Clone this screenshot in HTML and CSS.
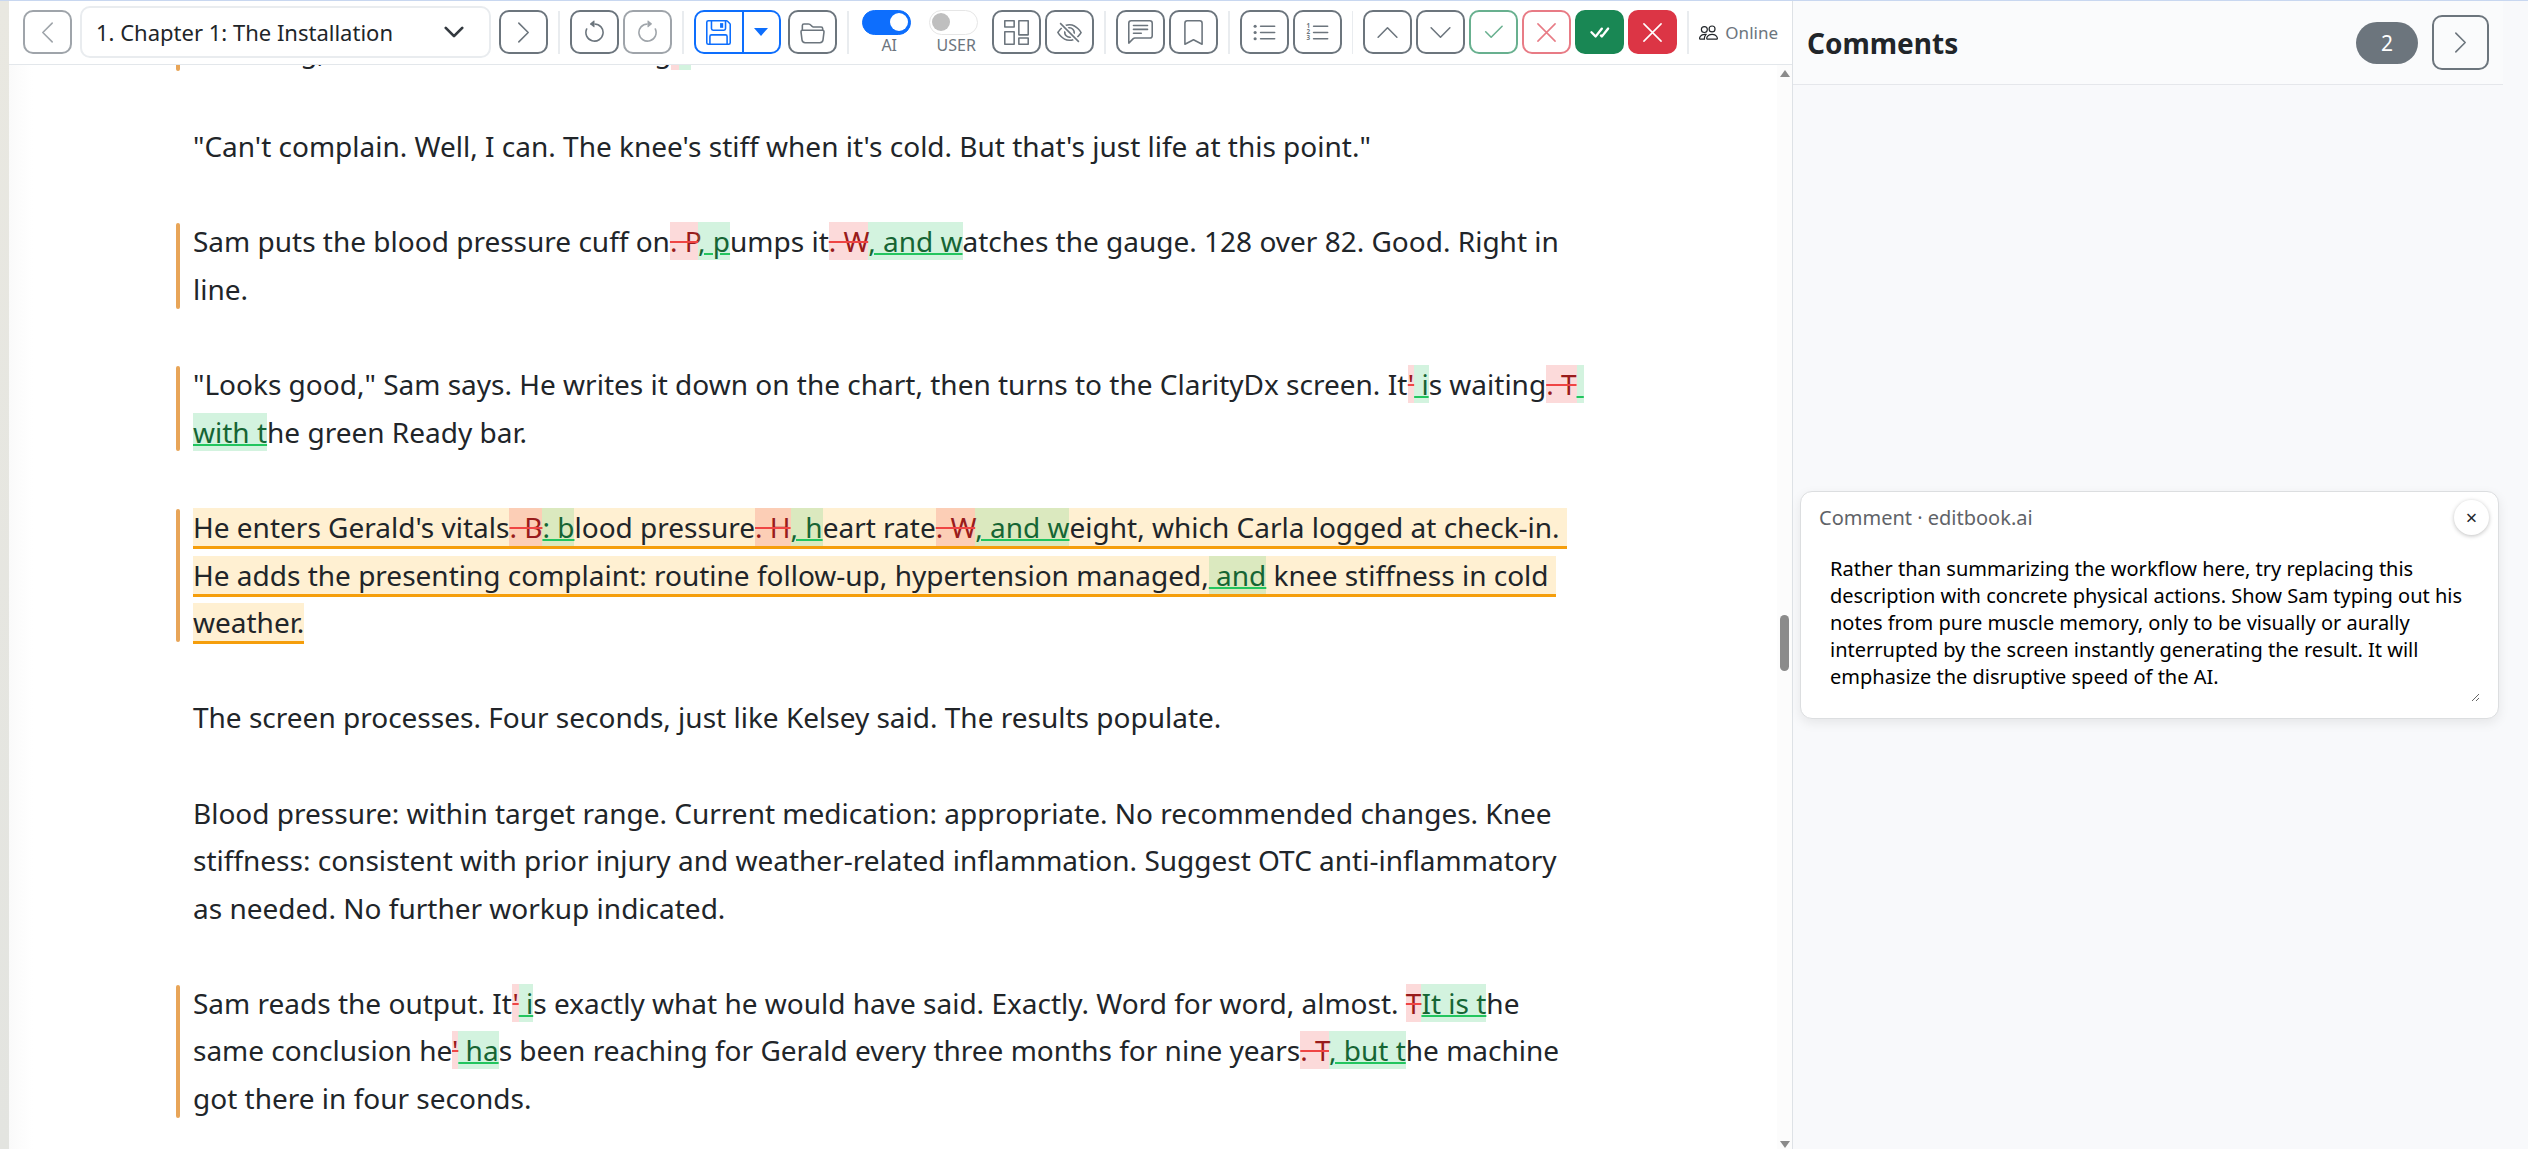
FILE: index.html
```html
<!DOCTYPE html>
<html lang="en">

<head>
  <meta charset="UTF-8">
  <meta name="viewport" content="width=device-width, initial-scale=1.0">
  <title>Chapter 1: The Installation</title>
  <link rel="stylesheet" href="styles.css">
</head>

<body>
  <svg class="sprite" aria-hidden="true">
    <symbol id="chevron-left" viewBox="0 0 16 16"><path class="line" d="M11 2L5 8l6 6" /></symbol>
    <symbol id="chevron-right" viewBox="0 0 16 16"><path class="line" d="M5 2l6 6-6 6" /></symbol>
    <symbol id="chevron-up" viewBox="0 0 16 16"><path class="line" d="M2 11l6-6 6 6" /></symbol>
    <symbol id="chevron-down" viewBox="0 0 16 16"><path class="line" d="M2 5l6 6 6-6" /></symbol>
    <symbol id="undo" viewBox="0 0 16 16">
      <path d="M8 3a5 5 0 1 1-4.546 2.914.5.5 0 0 0-.908-.417A6 6 0 1 0 8 2z" />
      <path d="M8 4.466V.534a.25.25 0 0 0-.41-.192L5.23 2.308a.25.25 0 0 0 0 .384l2.36 1.966A.25.25 0 0 0 8 4.466" />
    </symbol>
    <symbol id="redo" viewBox="0 0 16 16">
      <path d="M8 3a5 5 0 1 0 4.546 2.914.5.5 0 0 1 .908-.417A6 6 0 1 1 8 2z" />
      <path d="M8 4.466V.534a.25.25 0 0 1 .41-.192l2.36 1.966c.12.1.12.284 0 .384L8.41 4.658A.25.25 0 0 1 8 4.466" />
    </symbol>
    <symbol id="floppy" viewBox="0 0 16 16">
      <path d="M11 2H9v3h2z" />
      <path d="M1.5 0h11.586a1.5 1.5 0 0 1 1.06.44l1.415 1.414A1.5 1.5 0 0 1 16 2.914V14.5a1.5 1.5 0 0 1-1.5 1.5h-13A1.5 1.5 0 0 1 0 14.5v-13A1.5 1.5 0 0 1 1.5 0M1 1.5v13a.5.5 0 0 0 .5.5H2v-4.5A1.5 1.5 0 0 1 3.5 9h9a1.5 1.5 0 0 1 1.5 1.5V15h.5a.5.5 0 0 0 .5-.5V2.914a.5.5 0 0 0-.146-.353l-1.415-1.415A.5.5 0 0 0 13.086 1H13v4.5A1.5 1.5 0 0 1 11.5 7h-7A1.5 1.5 0 0 1 3 5.5V1H1.5a.5.5 0 0 0-.5.5m3 4a.5.5 0 0 0 .5.5h7a.5.5 0 0 0 .5-.5V1H4zM3 15h10v-4.5a.5.5 0 0 0-.5-.5h-9a.5.5 0 0 0-.5.5z" />
    </symbol>
    <symbol id="caret" viewBox="0 0 14 8"><path d="M0 0h14L7 8z" /></symbol>
    <symbol id="folder" viewBox="0 0 16 16">
      <path d="M1 3.5A1.5 1.5 0 0 1 2.5 2h2.764c.958 0 1.76.56 2.311 1.184C7.985 3.648 8.48 4 9 4h4.5A1.5 1.5 0 0 1 15 5.5v.64c.57.265.94.876.856 1.546l-.64 5.124A2.5 2.5 0 0 1 12.733 15H3.266a2.5 2.5 0 0 1-2.481-2.19l-.64-5.124A1.5 1.5 0 0 1 1 6.14zM2 6h12v-.5a.5.5 0 0 0-.5-.5H9c-.964 0-1.71-.629-2.174-1.154C6.374 3.334 5.82 3 5.264 3H2.5a.5.5 0 0 0-.5.5zm-.367 1a.5.5 0 0 0-.496.562l.64 5.124A1.5 1.5 0 0 0 3.266 14h9.468a1.5 1.5 0 0 0 1.489-1.314l.64-5.124A.5.5 0 0 0 14.367 7z" />
    </symbol>
    <symbol id="columns" viewBox="0 0 16 16">
      <path class="line" d="M.5.5h6v4h-6zM9.500.5h6v9h-6zM.5 7.500h6v8h-6zM9.500 11.500h6v4h-6z" />
    </symbol>
    <symbol id="eye-slash" viewBox="0 0 16 16">
      <path d="M13.359 11.238C15.06 9.72 16 8 16 8s-3-5.5-8-5.5a7 7 0 0 0-2.79.588l.77.771A6 6 0 0 1 8 3.5c2.12 0 3.879 1.168 5.168 2.457A13 13 0 0 1 14.828 8q-.086.13-.195.288c-.335.48-.83 1.12-1.465 1.755q-.247.248-.517.486z" />
      <path d="M11.297 9.176a3.5 3.5 0 0 0-4.474-4.474l.823.823a2.5 2.5 0 0 1 2.829 2.829zm-2.943 1.299.822.822a3.5 3.5 0 0 1-4.474-4.474l.823.823a2.5 2.5 0 0 0 2.829 2.829" />
      <path d="M3.35 5.47q-.27.24-.518.487A13 13 0 0 0 1.172 8l.195.288c.335.48.83 1.12 1.465 1.755C4.121 11.332 5.881 12.5 8 12.5c.716 0 1.39-.133 2.02-.36l.77.772A7 7 0 0 1 8 13.5C3 13.5 0 8 0 8s.939-1.721 2.641-3.238l.708.709zm10.296 8.884-12-12 .708-.708 12 12z" />
    </symbol>
    <symbol id="chat" viewBox="0 0 16 16">
      <path d="M14 1a1 1 0 0 1 1 1v8a1 1 0 0 1-1 1H4.414A2 2 0 0 0 3 11.586l-2 2V2a1 1 0 0 1 1-1zM2 0a2 2 0 0 0-2 2v12.793a.5.5 0 0 0 .854.353l2.853-2.853A1 1 0 0 1 4.414 12H14a2 2 0 0 0 2-2V2a2 2 0 0 0-2-2z" />
      <path class="line" d="M3.500 3.500h9M3.500 6h9M3.500 8.500h5" />
    </symbol>
    <symbol id="bookmark" viewBox="0 0 16 16">
      <path class="line" d="M2.500 15.500V2A1.500 1.500 0 0 1 4 .5h8A1.500 1.500 0 0 1 13.500 2v13.500L8 12.600z" />
    </symbol>
    <symbol id="list-ul" viewBox="0 0 16 16">
      <circle cx="2" cy="4" r="1" /><circle cx="2" cy="8" r="1" /><circle cx="2" cy="12" r="1" />
      <path class="line" d="M5.500 4h9M5.500 8h9M5.500 12h9" />
    </symbol>
    <symbol id="list-ol" viewBox="0 0 16 16">
      <text class="digit" x="1" y="5">1</text>
      <text class="digit" x="1" y="9">2</text>
      <text class="digit" x="1" y="13">3</text>
      <path class="line" d="M5.500 4h9M5.500 8h9M5.500 12h9" />
    </symbol>
    <symbol id="check" viewBox="0 0 16 16"><path class="line" d="M3 7.500L6.500 11l7-7" /></symbol>
    <symbol id="check-all" viewBox="0 0 16 16">
      <path d="M8.97 4.97a.75.75 0 0 1 1.07 1.05l-3.99 4.99a.75.75 0 0 1-1.08.02L2.324 8.384a.75.75 0 1 1 1.06-1.06l2.094 2.093L8.95 4.992zm-.92 5.14.92.92a.75.75 0 0 0 1.079-.02l3.992-4.99a.75.75 0 1 0-1.091-1.028L9.477 9.417l-.485-.486z" />
    </symbol>
    <symbol id="cross" viewBox="0 0 16 16"><path class="line" d="M2.500 2.500l11 11M13.500 2.500l-11 11" /></symbol>
    <symbol id="people" viewBox="0 0 16 16">
      <path d="M15 14s1 0 1-1-1-4-5-4-5 3-5 4 1 1 1 1zm-7.978-1L7 12.996c.001-.264.167-1.03.76-1.72C8.312 10.629 9.282 10 11 10c1.717 0 2.687.63 3.24 1.276.593.69.758 1.457.76 1.72l-.008.002-.014.002zM11 7a2 2 0 1 0 0-4 2 2 0 0 0 0 4m3-2a3 3 0 1 1-6 0 3 3 0 0 1 6 0M6.936 9.28a6 6 0 0 0-1.23-.247A7 7 0 0 0 5 9c-4 0-5 3-5 4q0 1 1 1h4.216A2.24 2.24 0 0 1 5 13c0-1.01.377-2.042 1.09-2.904.243-.294.526-.569.846-.816M4.92 10A5.5 5.5 0 0 0 4 13H1c0-.26.164-1.03.76-1.724.545-.636 1.492-1.256 3.16-1.275zM1.5 5.5a3 3 0 1 1 6 0 3 3 0 0 1-6 0m3-2a2 2 0 1 0 0 4 2 2 0 0 0 0-4" />
    </symbol>
  </svg>

  <div class="app">
    <div class="backdrop"></div>

    <main class="editor">
      <div class="toolbar">
        <div class="chapter-nav">
          <button class="btn" type="button" aria-label="Previous chapter" disabled><svg><use href="#chevron-left" /></svg></button>
          <select class="chapter-select" aria-label="Chapter">
            <option>1. Chapter 1: The Installation</option>
          </select>
          <button class="btn" type="button" aria-label="Next chapter"><svg><use href="#chevron-right" /></svg></button>
        </div>
        <span class="sep"></span>
        <div class="group">
          <button class="btn" type="button" aria-label="Undo"><svg><use href="#undo" /></svg></button>
          <button class="btn" type="button" aria-label="Redo" disabled><svg><use href="#redo" /></svg></button>
        </div>
        <span class="sep"></span>
        <div class="group file-group">
          <div class="split">
            <button class="btn save" type="button" aria-label="Save"><svg><use href="#floppy" /></svg></button>
            <button class="btn save-more" type="button" aria-label="Save options"><svg class="caret"><use href="#caret" /></svg></button>
          </div>
          <button class="btn" type="button" aria-label="Open"><svg><use href="#folder" /></svg></button>
        </div>
        <span class="sep"></span>
        <div class="toggles">
          <label class="toggle"><input type="checkbox" checked><span>AI</span></label>
          <label class="toggle"><input type="checkbox"><span>USER</span></label>
        </div>
        <div class="group">
          <button class="btn" type="button" aria-label="Layout"><svg><use href="#columns" /></svg></button>
          <button class="btn" type="button" aria-label="Hide changes"><svg><use href="#eye-slash" /></svg></button>
        </div>
        <span class="sep"></span>
        <div class="group">
          <button class="btn" type="button" aria-label="Comment"><svg><use href="#chat" /></svg></button>
          <button class="btn" type="button" aria-label="Bookmark"><svg><use href="#bookmark" /></svg></button>
        </div>
        <span class="sep"></span>
        <div class="group">
          <button class="btn" type="button" aria-label="Bulleted list"><svg><use href="#list-ul" /></svg></button>
          <button class="btn" type="button" aria-label="Numbered list"><svg><use href="#list-ol" /></svg></button>
        </div>
        <span class="sep"></span>
        <div class="group">
          <button class="btn" type="button" aria-label="Previous change"><svg><use href="#chevron-up" /></svg></button>
          <button class="btn" type="button" aria-label="Next change"><svg><use href="#chevron-down" /></svg></button>
          <button class="btn accept" type="button" aria-label="Accept change" disabled><svg><use href="#check" /></svg></button>
          <button class="btn reject" type="button" aria-label="Reject change" disabled><svg><use href="#cross" /></svg></button>
          <button class="btn accept-all" type="button" aria-label="Accept all"><svg><use href="#check-all" /></svg></button>
          <button class="btn reject-all" type="button" aria-label="Reject all"><svg><use href="#cross" /></svg></button>
        </div>
        <span class="sep"></span>
        <div class="status"><svg><use href="#people" /></svg>Online</div>
      </div>

      <div class="page">
        <article class="manuscript">
          <p class="changed">"Morning, Gerald. How are we doing<del>.</del><ins>?</ins></p>
          <p>"Can't complain. Well, I can. The knee's stiff when it's cold. But that's just life at this point."</p>
          <p class="changed">Sam puts the blood pressure cuff on<del>. P</del><ins>, p</ins>umps it<del>. W</del><ins>, and w</ins>atches the gauge. 128 over 82. Good. Right in line.</p>
          <p class="changed">"Looks good," Sam says. He writes it down on the chart, then turns to the ClarityDx screen. It<del>'</del><ins> i</ins>s waiting<del>. T</del><ins> with t</ins>he green Ready bar.</p>
          <p class="changed"><mark>He enters Gerald's vitals<del>. B</del><ins>: b</ins>lood pressure<del>. H</del><ins>, h</ins>eart rate<del>. W</del><ins>, and w</ins>eight, which Carla logged at check-in. He adds the presenting complaint: routine follow-up, hypertension managed,<ins> and</ins> knee stiffness in cold weather.</mark></p>
          <p>The screen processes. Four seconds, just like Kelsey said. The results populate.</p>
          <p>Blood pressure: within target range. Current medication: appropriate. No recommended changes. Knee stiffness: consistent with prior injury and weather-related inflammation. Suggest OTC anti-inflammatory as needed. No further workup indicated.</p>
          <p class="changed">Sam reads the output. It<del>'</del><ins> i</ins>s exactly what he would have said. Exactly. Word for word, almost. <del>T</del><ins>It is t</ins>he same conclusion he<del>'</del><ins> ha</ins>s been reaching for Gerald every three months for nine years<del>. T</del><ins>, but t</ins>he machine got there in four seconds.</p>
        </article>
        <div class="scrollbar" aria-hidden="true">
          <span class="arrow-up"></span>
          <span class="thumb"></span>
          <span class="arrow-down"></span>
        </div>
      </div>
    </main>

    <aside class="comments">
      <header class="comments-header">
        <h2>Comments</h2>
        <span class="badge">2</span>
        <button class="btn collapse" type="button" aria-label="Collapse comments"><svg><use href="#chevron-right" /></svg></button>
      </header>
      <section class="comment">
        <div class="comment-head">
          <label for="comment-text">Comment · editbook.ai</label>
          <button class="close" type="button" aria-label="Delete comment">×</button>
        </div>
        <textarea id="comment-text" rows="5">Rather than summarizing the workflow here, try replacing this description with concrete physical actions. Show Sam typing out his notes from pure muscle memory, only to be visually or aurally interrupted by the screen instantly generating the result. It will emphasize the disruptive speed of the AI.</textarea>
      </section>
    </aside>
  </div>
</body>

</html>
```
FILE: styles.css
```css
* {
  box-sizing: border-box;
}

body {
  margin: 0;
  height: 100vh;
  overflow: hidden;
  background-color: #fff;
  color: #212529;
  font-family: "Noto Sans", sans-serif;
}

button,
select,
textarea {
  font-family: inherit;
}

.sprite {
  display: none;
}

.line {
  fill: none;
  stroke: currentColor;
  stroke-linecap: round;
  stroke-linejoin: round;
}

.digit {
  font-size: 4px;
  font-weight: bold;
}

.app {
  display: grid;
  grid-template-columns: 9px minmax(0, 1fr) 736px;
  height: 100%;
  border-top: 1px solid #c8d7f0;
}

.backdrop {
  background: linear-gradient(#e9e8e1, #e3e4e0);
}

.editor {
  display: flex;
  flex-direction: column;
  min-height: 0;
}

/* Toolbar */

.toolbar {
  display: flex;
  align-items: center;
  flex-shrink: 0;
  padding: 5px 14px 6px;
  border-bottom: 1px solid #e3e7eb;
}

.chapter-nav {
  display: flex;
  align-items: center;
  gap: 8px;
}

.group {
  display: flex;
  gap: 4px;
}

.file-group {
  gap: 7px;
}

.sep {
  width: 2px;
  height: 43px;
  margin: 0 10px;
  background-color: #e9ecef;
}

.btn {
  display: flex;
  align-items: center;
  justify-content: center;
  width: 49px;
  height: 44px;
  padding: 0;
  border: 2px solid #6c757d;
  border-radius: 10px;
  background-color: transparent;
  color: #6c757d;
  cursor: pointer;
}

.btn svg {
  width: 25px;
  height: 25px;
  fill: currentColor;
}

.btn:disabled {
  opacity: 0.65;
  cursor: default;
}

.chapter-select {
  appearance: none;
  width: 411px;
  height: 52px;
  padding: 0 48px 0 14px;
  border: 2px solid #e9ecef;
  border-radius: 10px;
  background: #fff url("data:image/svg+xml,%3Csvg xmlns='http://www.w3.org/2000/svg' viewBox='0 0 16 16'%3E%3Cpath fill='none' stroke='%23343a40' stroke-linecap='round' stroke-linejoin='round' stroke-width='2' d='m2 5 6 6 6-6'/%3E%3C/svg%3E") no-repeat right 24px center / 22px 22px;
  color: #212529;
  font-size: 22px;
}

.split {
  display: flex;
}

.split .btn {
  border-color: #0d6efd;
  color: #0d6efd;
}

.split .save {
  width: 50px;
  border-radius: 10px 0 0 10px;
}

.split .save-more {
  width: 37px;
  border-left: 0;
  border-radius: 0 10px 10px 0;
}

.btn .caret {
  width: 14px;
  height: 8px;
}

.toggles {
  display: flex;
  gap: 18px;
  padding: 0 14px 0 3px;
}

.toggle {
  display: flex;
  flex-direction: column;
  align-items: center;
  width: 49px;
  color: #6c757d;
  font-size: 16px;
  line-height: 20px;
}

.toggle span {
  padding-left: 6px;
}

.toggle input {
  appearance: none;
  display: flex;
  align-items: center;
  width: 49px;
  height: 25px;
  margin: 0;
  padding: 0 2px;
  border: 1px solid #e6e6e6;
  border-radius: 13px;
  background-color: #fff;
}

.toggle input::before {
  content: "";
  width: 18px;
  height: 18px;
  border-radius: 50%;
  background-color: #bfbfbf;
}

.toggle input:checked {
  justify-content: flex-end;
  border-color: #0d6efd;
  background-color: #0d6efd;
}

.toggle input:checked::before {
  background-color: #fff;
}

.accept {
  border-color: #198754;
  color: #198754;
}

.reject {
  border-color: #dc3545;
  color: #dc3545;
}

.accept-all {
  border-color: #198754;
  background-color: #198754;
  color: #fff;
}

.reject-all {
  border-color: #dc3545;
  background-color: #dc3545;
  color: #fff;
}

.status {
  display: flex;
  align-items: center;
  gap: 7px;
  color: #6c757d;
  font-size: 17px;
}

.status svg {
  width: 19px;
  height: 19px;
  fill: #212529;
}

/* Manuscript */

.page {
  display: flex;
  flex: 1;
  min-height: 0;
  overflow: hidden;
  background: linear-gradient(to right, #fafafa, #fff 24px);
}

.manuscript {
  flex: 0 1 1400px;
  margin: -37px auto 0;
  padding-right: 12px;
  font-size: 28px;
  line-height: 1.7;
}

.manuscript p {
  position: relative;
  margin: 0 0 1.7em;
  white-space: pre-wrap;
}

/* change bar in the margin */
.manuscript .changed::before {
  content: "";
  position: absolute;
  top: 5px;
  bottom: 5px;
  left: -17px;
  width: 4px;
  border-radius: 2px;
  background-color: #e8a558;
}

.manuscript del {
  background-color: rgba(239, 68, 68, 0.2);
  color: #991b1b;
  text-decoration: line-through 2px #ef4444;
}

.manuscript ins {
  background-color: rgba(34, 197, 94, 0.2);
  color: #166534;
  text-decoration: underline 2px #22c55e;
}

.manuscript mark {
  border-bottom: 3px solid #f59e0b;
  background-color: #fff0d2;
  color: inherit;
}

.manuscript mark ins {
  background-color: rgba(34, 197, 94, 0.16);
}

.scrollbar {
  display: flex;
  flex-direction: column;
  align-items: center;
  width: 15px;
  padding: 5px 0 1px;
  background-color: #fcfcfc;
}

.arrow-up,
.arrow-down {
  border: 5px solid transparent;
  border-top-width: 0;
  border-bottom: 7px solid #8b8b8b;
}

.arrow-down {
  margin-top: auto;
  border-top: 7px solid #8b8b8b;
  border-bottom-width: 0;
}

.thumb {
  width: 9px;
  height: 56px;
  margin-top: 538px;
  border-radius: 5px;
  background-color: #8b8b8b;
}

/* Comments */

.comments {
  padding-right: 25px;
  border-left: 1px solid #dee2e6;
  background-color: #f8f9fb;
}

.comments-header {
  display: flex;
  align-items: center;
  gap: 14px;
  padding: 14px;
  border-bottom: 1px solid #e5e7eb;
  background-color: #fafbfc;
}

.comments-header h2 {
  flex: 1;
  margin: 0;
  font-size: 28px;
  line-height: 34px;
}

.badge {
  padding: 0 25px;
  border-radius: 21px;
  background-color: #6c757d;
  color: #fff;
  font-size: 21px;
  line-height: 42px;
}

.collapse {
  width: 57px;
  height: 55px;
}

.comment {
  margin: 406px 4px 0 7px;
  padding: 8px 9px 16px 18px;
  border: 1px solid #dcdee0;
  border-radius: 12px;
  background-color: #fff;
  box-shadow: 0 4px 12px rgba(0, 0, 0, 0.08);
}

.comment-head {
  display: flex;
  align-items: center;
  justify-content: space-between;
  color: #5f6368;
  font-size: 20px;
}

.close {
  width: 35px;
  height: 35px;
  padding: 0;
  border: 0;
  border-radius: 50%;
  background-color: #fff;
  box-shadow: 0 1px 4px rgba(0, 0, 0, 0.25);
  color: #212529;
  font-size: 20px;
  line-height: 35px;
  cursor: pointer;
}

.comment textarea {
  display: block;
  width: calc(100% - 9px);
  margin-top: 8px;
  padding: 12px 8px 12px 11px;
  border: 0;
  outline: none;
  background-color: transparent;
  color: #000;
  font-size: 20px;
  line-height: 27px;
  resize: vertical;
}
```
